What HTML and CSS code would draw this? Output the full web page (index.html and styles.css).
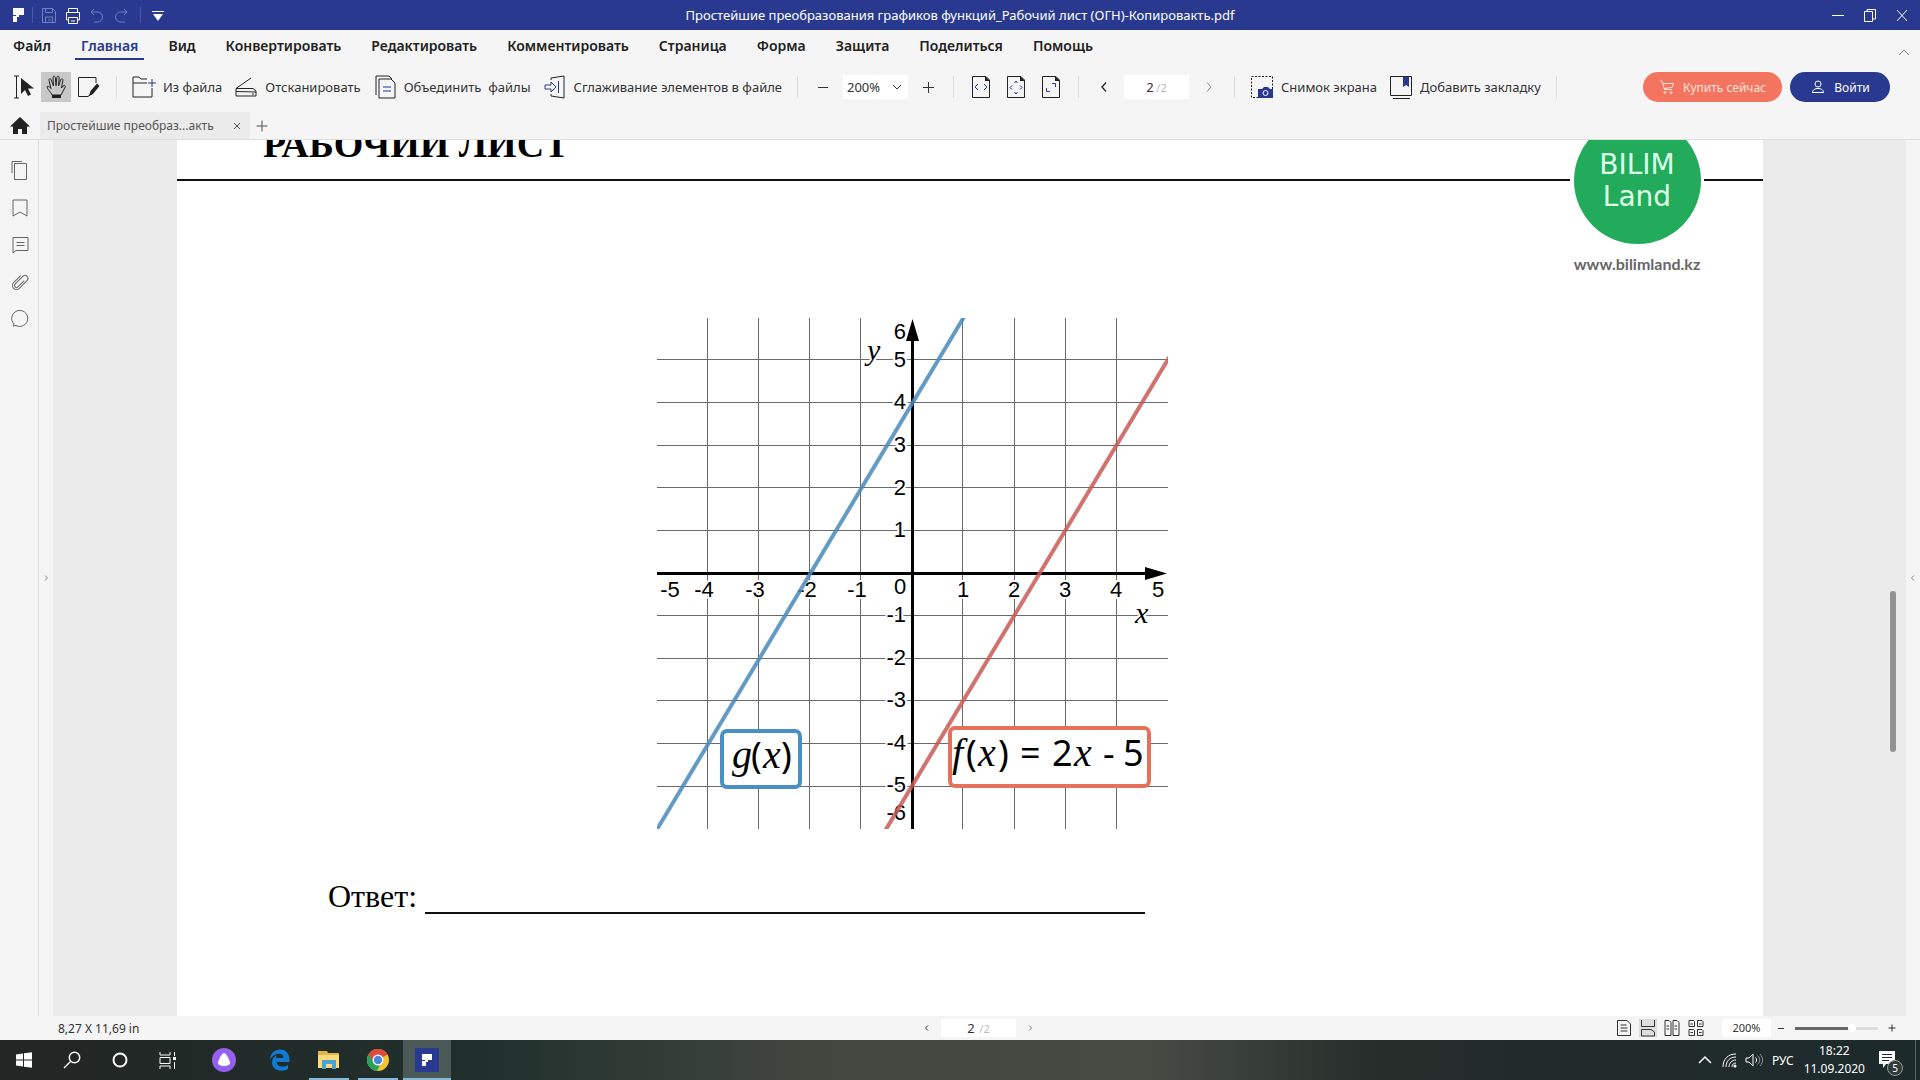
FILE: index.html
```
<!DOCTYPE html>
<html lang="ru">
<head>
    <meta charset="UTF-8">
    <meta name="viewport" content="width=device-width, initial-scale=1.0">
    <title>Простейшие преобразования графиков функций</title>
    <link rel="stylesheet" href="styles.css">
</head>
<body>
    <header class="titlebar">
        <div class="quick">
            <svg class="icon" viewBox="0 0 24 24"><path class="fill" d="M7 5h11v7h-5v2h-2v5H7v-6h3v-1H7z"/></svg>
            <span class="bar"></span>
            <button class="dim" aria-label="Сохранить"><svg class="icon" viewBox="0 0 24 24"><path d="M5.500 5.500h10l3 3v11h-13zM8.500 5.500v4h7v-4M8.500 19v-5h7v5M11 17h3"/></svg></button>
            <button aria-label="Печать"><svg class="icon" viewBox="0 0 24 24"><path d="M7.500 9V5.500h9V9M7.500 17h-2V9.500h13V17h-2M7.500 14.500h9v6h-9zM10 18h4"/></svg></button>
            <button class="dim" aria-label="Отменить"><svg class="icon" viewBox="0 0 24 24"><path d="M9 6L6 9l3 3M6.500 9h6a5 5 0 010 10H9"/></svg></button>
            <button class="dim" aria-label="Повторить"><svg class="icon" viewBox="0 0 24 24"><path d="M15 6l3 3-3 3M17.500 9h-6a5 5 0 000 10H16"/></svg></button>
            <span class="bar"></span>
            <button aria-label="Настройка панели"><svg class="icon" viewBox="0 0 24 24"><path d="M6 8.500h12"/><path class="fill" d="M7 11h10l-5 7z"/></svg></button>
        </div>
        <div class="file-name">Простейшие преобразования графиков функций_Рабочий лист (ОГН)-Копировакть.pdf</div>
        <div class="window-buttons">
            <button aria-label="Свернуть"><svg class="icon" viewBox="0 0 24 24"><path d="M6 12.500h12"/></svg></button>
            <button aria-label="Развернуть"><svg class="icon" viewBox="0 0 24 24"><path d="M6.500 8.500h8v10h-8zM9 8V6.500h8.500V16H15"/></svg></button>
            <button aria-label="Закрыть"><svg class="icon" viewBox="0 0 24 24"><path d="M7 7l10 11M17 7L7 18"/></svg></button>
        </div>
    </header>

    <nav class="menu">
        <button>Файл</button>
        <button class="active">Главная</button>
        <button>Вид</button>
        <button>Конвертировать</button>
        <button>Редактировать</button>
        <button>Комментировать</button>
        <button>Страница</button>
        <button>Форма</button>
        <button>Защита</button>
        <button>Поделиться</button>
        <button>Помощь</button>
        <button class="collapse" aria-label="Свернуть ленту"><svg class="icon" viewBox="0 0 24 24"><path d="M7 22l5-5 5 5"/></svg></button>
    </nav>

    <div class="toolbar">
        <div class="modes">
            <button aria-label="Выделение"><svg class="tool-icon" viewBox="0 0 24 24"><path d="M2 1h5M4.500 1v22M2 23h5"/><path class="fill" d="M9 3v16l4-4 3 6 3-1.500-3-6h6z"/></svg></button>
            <button class="on" aria-label="Рука"><svg class="tool-icon" viewBox="0 0 24 24"><path d="M8 20c-1-3-5-6-5-8 0-1.500 2-1 4 1.500L5 5.500c-.5-2 1.600-2.400 2.200-.6L9.500 11 9 2.700c0-2 2.100-2 2.300 0l.7 8 .9-8.200c.3-2 2.400-1.600 2.200.3L14.600 11l2.100-6.200c.6-1.700 2.600-1 2.200.8L17.500 13l1.700-2c1.200-1.300 2.700-.3 2 1L17 20M8 20h9"/><path class="fill" d="M8 20h9v3H8z"/></svg></button>
            <button aria-label="Правка"><svg class="tool-icon" viewBox="0 0 24 24"><path d="M20 8V2.500H2.500v19H12l4-3"/><path class="fill" d="M13 21l1.500-5L21 8.500l2.500 2.500-6.500 8z"/></svg></button>
        </div>
        <span class="sep"></span>
        <div class="actions">
            <button><svg class="tool-icon" viewBox="0 0 24 24"><path d="M15 4H9L7 2H1v20h19V13M1 8h14"/><path class="accent" d="M20 4v8M16 8h8"/></svg>Из файла</button>
            <button><svg class="tool-icon" viewBox="0 0 24 24"><path d="M17 3L2 13.500V21h20v-5l-3-2.500H2M2 16.500l20 .5M18 19h2"/></svg>Отсканировать</button>
            <button><svg class="tool-icon" viewBox="0 0 24 24"><path d="M6 4h12l4 4v15H6zM3 20V1h13l3 3"/><path class="accent" d="M10 12h8M10 16h8"/></svg>Объединить&nbsp; файлы</button>
            <button><svg class="tool-icon" viewBox="0 0 24 24"><path d="M8 5V3l13-2v22L8 21v-2"/><path class="accent" d="M2 10h6V7l5 5-5 5v-3H2zM15.500 6v12"/></svg>Сглаживание элементов в файле</button>
        </div>
        <span class="sep"></span>
        <div class="zoom">
            <button class="step" aria-label="Уменьшить"><svg class="step-icon" viewBox="0 0 20 20"><path d="M5 10.500h10"/></svg></button>
            <div class="select-box">
                <select aria-label="Масштаб"><option>200%</option><option>100%</option></select>
                <svg class="arrow" viewBox="0 0 10 10"><path d="M1 3l4 4 4-4"/></svg>
            </div>
            <button class="step" aria-label="Увеличить"><svg class="step-icon" viewBox="0 0 20 20"><path d="M5 10.500h11M10.500 5v11"/></svg></button>
        </div>
        <span class="sep"></span>
        <div class="fit">
            <button aria-label="По ширине"><svg class="tool-icon" viewBox="0 0 24 24"><path d="M3.500 1.500H17l3.500 3.500v17.500h-17z"/><path class="fill" d="M16 1l5 5h-5z"/><path class="accent" d="M9 9l-3 3 3 3M15 9l3 3-3 3"/></svg></button>
            <button aria-label="Страница целиком"><svg class="tool-icon" viewBox="0 0 24 24"><path d="M3.500 1.500H17l3.500 3.500v17.500h-17z"/><path class="fill" d="M16 1l5 5h-5z"/><path class="accent" d="M8 10.500L6 12.500l2 2M16 10.500l2 2-2 2M10.500 8l1.500-2 1.500 2M10.500 17l1.500 2 1.500-2"/></svg></button>
            <button aria-label="Реальный размер"><svg class="tool-icon" viewBox="0 0 24 24"><path d="M3.500 1.500H17l3.500 3.500v17.500h-17z"/><path class="fill" d="M16 1l5 5h-5z"/><path class="accent" d="M13 8.500h3.500V12M7.500 13v3.500H11"/></svg></button>
        </div>
        <span class="sep"></span>
        <div class="pager">
            <button class="step" aria-label="Предыдущая страница"><svg class="step-icon" viewBox="0 0 20 20"><path stroke-width="1.500" d="M12 5.500L8 10l4 4.500"/></svg></button>
            <label class="page-box"><input type="text" value="2" aria-label="Страница"><span>/2</span></label>
            <button class="step next" aria-label="Следующая страница"><svg class="step-icon" viewBox="0 0 20 20"><path d="M8 5.500l4 4.500-4 4.500"/></svg></button>
        </div>
        <span class="sep"></span>
        <div class="actions">
            <button><svg class="tool-icon" viewBox="0 0 24 24"><path stroke-dasharray="2 1.500" d="M1.500 1.500h21v21h-21z"/><path class="accent-fill" d="M8 14h4l2-2h4l2 2h3v9H8z"/><circle cx="15.500" cy="18" r="2.500" stroke="#fff"/></svg>Снимок экрана</button>
            <button><svg class="tool-icon" viewBox="0 0 24 24"><path d="M1.500 1.500h21v19h-21zM4 23.500h17"/><path class="accent-fill" d="M14 2h6v10l-3-2-3 2z"/></svg>Добавить закладку</button>
        </div>
        <span class="sep"></span>
        <div class="account">
            <button class="pill buy"><svg class="pill-icon" viewBox="0 0 16 16"><path d="M1 2h2l2.500 8.500H13M4 4.500h10.500L13 8.500l-8 1"/><circle cx="6" cy="13.500" r="1"/><circle cx="12" cy="13.500" r="1"/></svg>Купить сейчас</button>
            <button class="pill login"><svg class="pill-icon" viewBox="0 0 16 16"><circle cx="8" cy="5" r="3"/><path d="M2.500 13.500c0-5.500 11-5.500 11 0z"/></svg>Войти</button>
        </div>
    </div>

    <div class="tabs">
        <button class="home" aria-label="Домой"><svg class="icon" viewBox="0 0 24 24"><path class="fill" d="M12 3L2 12.500h3V20h5v-5h4v5h5v-7.500h3z"/></svg></button>
        <div class="tab">
            <span>Простейшие преобраз...акть</span>
            <button class="tab-close" aria-label="Закрыть вкладку"><svg class="small-icon" viewBox="0 0 12 12"><path d="M3 3l6 6M9 3L3 9"/></svg></button>
        </div>
        <button class="tab-add" aria-label="Новая вкладка"><svg class="small-icon" viewBox="0 0 12 12"><path d="M.5 6h11M6 .5v11"/></svg></button>
    </div>

    <main class="workspace">
        <aside class="side">
            <button aria-label="Миниатюры"><svg class="icon" viewBox="0 0 24 24"><path d="M6.500 4.500h12v16h-12zM4 14V2.500h10"/></svg></button>
            <button aria-label="Закладки"><svg class="icon" viewBox="0 0 24 24"><path d="M5 4h14v16l-7-4-7 4z"/></svg></button>
            <button aria-label="Комментарии"><svg class="icon" viewBox="0 0 24 24"><path d="M5 4.500h15v13H8l-3 2.500zM8.500 9.500h8M8.500 12.500h8"/></svg></button>
            <button aria-label="Вложения"><svg class="icon" viewBox="0 0 24 24"><g transform="rotate(45 12 12)"><path d="M8 7v10a4 4 0 008 0V6a3 3 0 00-6 0v11a2 2 0 004 0V8"/></g></svg></button>
            <button aria-label="Поиск"><svg class="icon" viewBox="0 0 24 24"><path d="M6 17a8 8 0 112 1.500L5 19z"/></svg></button>
        </aside>
        <button class="edge" aria-label="Показать панель"><svg class="edge-icon" viewBox="0 0 8 8"><path d="M3 1.500L5.500 4 3 6.500"/></svg></button>
        <div class="viewer">
            <article class="page">
                <div class="page-head">
                    <h1>РАБОЧИЙ ЛИСТ</h1>
                    <div class="logo">
                        <div class="logo-circle"><span>BILIM</span><span>Land</span></div>
                        <a href="#">www.bilimland.kz</a>
                    </div>
                </div>

                <svg class="chart" viewBox="0 0 511 511" role="img" aria-label="Графики функций g(x) и f(x)">
                    <path class="grid" d="M50.500 0v511M101.500 0v511M152.500 0v511M203.500 0v511M305.500 0v511M357.500 0v511M408.500 0v511M459.500 0v511M0 41.500h511M0 84.500h511M0 127.500h511M0 169.500h511M0 212.500h511M0 297.500h511M0 340.500h511M0 382.500h511M0 425.500h511M0 468.500h511"/>
                    <g class="nums">
                        <text x="13" y="279">-5</text>
                        <text x="47" y="279">-4</text>
                        <text x="98" y="279">-3</text>
                        <text x="150" y="279">-2</text>
                        <text x="200" y="279">-1</text>
                        <text x="243" y="276">0</text>
                        <text x="306" y="279">1</text>
                        <text x="357" y="279">2</text>
                        <text x="408" y="279">3</text>
                        <text x="459" y="279">4</text>
                        <text x="501" y="279">5</text>
                    </g>
                    <g class="nums end">
                        <text x="249" y="21">6</text>
                        <text x="249" y="49">5</text>
                        <text x="249" y="91">4</text>
                        <text x="249" y="134">3</text>
                        <text x="249" y="177">2</text>
                        <text x="249" y="219">1</text>
                        <text x="249" y="304">-1</text>
                        <text x="249" y="347">-2</text>
                        <text x="249" y="389">-3</text>
                        <text x="249" y="432">-4</text>
                        <text x="249" y="474">-5</text>
                        <text x="249" y="502">-6</text>
                    </g>
                    <text class="axis-name" x="210" y="42">y</text>
                    <text class="axis-name" x="478" y="305">x</text>
                    <path class="axis" d="M0 255.500h495M255.500 12v499"/>
                    <path d="M510 255.500l-22-6.500v13zM255.500 1l-6.500 22h13z"/>
                    <path class="line-g" d="M-1 513L307-1"/>
                    <path class="line-f" d="M228 513L513 38"/>
                    <rect class="box-g" x="65" y="413" width="78" height="56" rx="5"/>
                    <rect class="box-f" x="293" y="410" width="199" height="58" rx="5"/>
                    <g class="formula">
                        <text class="math" x="75" y="450">g</text>
                        <text x="94" y="450">(</text>
                        <text class="math" x="106" y="450">x</text>
                        <text x="124" y="450">)</text>
                        <text class="math" x="295" y="448">f</text>
                        <text x="309" y="448">(</text>
                        <text class="math" x="321" y="448">x</text>
                        <text x="341" y="448">)</text>
                        <text x="363" y="448">=</text>
                        <text x="395" y="448">2</text>
                        <text class="math" x="417" y="448">x</text>
                        <text x="446" y="448">-</text>
                        <text x="466" y="448">5</text>
                    </g>
                </svg>

                <div class="answer"><label for="answer">Ответ:</label><input type="text" id="answer"></div>
            </article>
            <span class="thumb"></span>
        </div>
        <button class="edge" aria-label="Показать панель справа"><svg class="edge-icon" viewBox="0 0 8 8"><path d="M5 1.500L2.500 4 5 6.500"/></svg></button>
    </main>

    <footer class="status">
        <span class="size">8,27 X 11,69 in</span>
        <div class="status-pager">
            <button aria-label="Назад"><svg class="edge-icon" viewBox="0 0 8 8"><path d="M5 1.500L2.500 4 5 6.500"/></svg></button>
            <label class="page-box"><input type="text" value="2" aria-label="Номер страницы"><span>/2</span></label>
            <button class="next" aria-label="Вперед"><svg class="edge-icon" viewBox="0 0 8 8"><path d="M3 1.500L5.500 4 3 6.500"/></svg></button>
        </div>
        <div class="status-right">
            <button aria-label="Одна страница"><svg class="view-icon" viewBox="0 0 18 18"><path d="M2.500 1.500H12L15.500 5v11.500h-13zM5.500 6h6M5.500 9h7M5.500 12h7"/></svg></button>
            <button class="on" aria-label="Прокрутка"><svg class="view-icon" viewBox="0 0 18 18"><path d="M2.500 1v6.500h13V1M2.500 17v-6.500H12L15.500 13v4z"/></svg></button>
            <button aria-label="Две страницы"><svg class="view-icon" viewBox="0 0 18 18"><path d="M2 1.500h4l2 2v13H2zM10 1.500h4l2 2v13h-6zM3.500 7H6M3.500 10H6M11.500 7H14M11.500 10H14"/></svg></button>
            <button aria-label="Сетка страниц"><svg class="view-icon" viewBox="0 0 18 18"><path d="M2 1.500h4.500l1 1v5H2zM10.500 1.500H15l1 1v5h-5.500zM2 10.500h4.500l1 1v5H2zM10.500 10.500H15l1 1v5h-5.500zM3.500 5H6M12 5h2.500M3.500 13.500H6M12 13.500h2.500"/></svg></button>
            <span class="percent">200%</span>
            <button class="mini" aria-label="Мельче"><svg class="edge-icon" viewBox="0 0 8 8"><path d="M1 4.500h6"/></svg></button>
            <input type="range" class="slider" aria-label="Масштаб страницы" min="0" max="100" value="70">
            <button class="mini" aria-label="Крупнее"><svg class="edge-icon" viewBox="0 0 8 8"><path d="M.5 4h7M4 .5v7"/></svg></button>
        </div>
    </footer>

    <div class="taskbar">
        <div class="apps">
            <button aria-label="Пуск"><svg class="icon" viewBox="0 0 24 24"><path class="fill" d="M4 6.500l7-1v6H4zM12 5.300l8-1.100v7.300h-8zM4 12.500h7v6l-7-1zM12 12.500h8v7.300l-8-1.100z"/></svg></button>
            <button aria-label="Поиск"><svg class="icon" viewBox="0 0 24 24"><g stroke-width="1.500"><circle cx="14.500" cy="9.500" r="5.200"/><path d="M10.500 13.500L4 20"/></g></svg></button>
            <button aria-label="Помощник"><svg class="icon" viewBox="0 0 24 24"><circle cx="12" cy="12" r="6.500" stroke-width="2"/></svg></button>
            <button aria-label="Представление задач"><svg class="icon" viewBox="0 0 24 24"><path d="M4 4v3h10V4M4 9.500h10v6H4zM4 21v-3h10v3M18.500 4v4M18.500 14v7"/><path class="fill" d="M17 9h3v3h-3z"/></svg></button>
        </div>
        <div class="apps pinned">
            <button aria-label="Алиса"><svg class="icon" viewBox="0 0 24 24"><circle cx="12" cy="12" r="12" fill="#9460ee" stroke="none"/><path class="fill" d="M12 5c2 0 6 7.500 6 10 0 4-12 4-12 0 0-2.500 4-10 6-10z"/></svg></button>
        </div>
        <div class="apps pinned">
            <button aria-label="Edge"><svg class="icon" viewBox="0 0 24 24"><path fill="#0f7cd4" stroke="none" d="M2 11.500C2.500 5 7 1.500 12 1.500c6.500 0 9.500 5 9.500 10v2.500H8.500c.5 5.500 7.500 5.500 11.500 3v4c-6 3.500-16 1.500-16-6.500 0-3.500 2-6 5-7.500-.5.800-1 1.800-1 3h7.500c0-6-9.500-5.500-13.500 1.500z"/></svg></button>
            <button class="open" aria-label="Проводник"><svg class="icon" viewBox="0 0 24 24"><path fill="#e3b54a" stroke="none" d="M1 3h9l1 2h11v15H1z"/><path fill="#fbdb79" stroke="none" d="M1 7h21v13H1z"/><path fill="#4aa3d6" stroke="none" d="M5 12h14v9h-4v-5H9v5H5z"/></svg></button>
            <button class="open" aria-label="Chrome"><svg class="icon" viewBox="0 0 24 24"><g stroke="none"><circle cx="12" cy="12" r="11" fill="#f2c230"/><path fill="#dd4b3e" d="M12 12L2.500 6.500a11 11 0 0119 0z"/><path fill="#2aa15a" d="M12 12L2.500 6.500a11 11 0 008.500 16.500l4.500-9z"/><path fill="#dd4b3e" d="M12 7h9.800a11 11 0 00-19.300-.5L7.500 14z"/><circle cx="12" cy="12" r="5.500" fill="#fff"/><circle cx="12" cy="12" r="4.200" fill="#4a86dd"/></g></svg></button>
            <button class="open current" aria-label="PDFelement"><svg class="icon" viewBox="0 0 24 24"><path fill="#293990" stroke="none" d="M0 0h24v24H0z"/><path class="fill" d="M7 6h10v6h-4v2h-2v4H7v-5h3v-1H7z"/></svg></button>
        </div>
        <div class="tray">
            <svg class="tray-icon" viewBox="0 0 24 24"><path d="M6 15l6-6 6 6" stroke-width="1.500"/></svg>
            <svg class="tray-icon" viewBox="0 0 24 24"><path d="M6 19C6 11 11 6 19 6M9 19c0-6 4-10 10-10M12 19c0-4 3-7 7-7M15 19c0-2.500 1.500-4 4-4"/><circle cx="18" cy="18" r="1.500" class="fill"/></svg>
            <svg class="tray-icon" viewBox="0 0 24 24"><path d="M5 10h3l4-4v12l-4-4H5zM14.500 9.500c1.500 1.500 1.500 3.500 0 5"/><path opacity=".5" d="M16.500 7.500c3 3 3 6 0 9M19 6c3.500 4 3.500 8 0 12"/></svg>
            <span class="lang">РУС</span>
            <div class="clock"><span>18:22</span><span>11.09.2020</span></div>
            <div class="notify">
                <svg class="icon" viewBox="0 0 24 24"><path class="fill" d="M4 3h16v13h-9l-3 4v-4H4z"/><path stroke="#1d2a2b" d="M7 6.500h10M7 9.500h10M7 12.500h7"/></svg>
                <span class="badge">5</span>
            </div>
            <span class="peek"></span>
        </div>
    </div>
</body>
</html>
```
FILE: styles.css
```
* {
    box-sizing: border-box;
}
body {
    margin: 0;
    height: 100vh;
    display: flex;
    flex-direction: column;
    overflow: hidden;
    background-color: #f5f5f5;
    color: #333;
    font-family: "Noto Sans", "Open Sans", sans-serif;
    font-size: 13px;
}
button {
    display: flex;
    align-items: center;
    justify-content: center;
    padding: 0;
    border: none;
    background: none;
    color: inherit;
    font: inherit;
    white-space: nowrap;
    cursor: pointer;
}
input, select {
    border: none;
    font: inherit;
    color: inherit;
}
svg {
    display: block;
    flex: none;
    fill: none;
    stroke: currentColor;
}
.fill {
    fill: currentColor;
    stroke: none;
}
.accent {
    stroke: #293990;
}
.accent-fill {
    fill: #293990;
    stroke: none;
}
.icon, .tool-icon {
    width: 24px;
    height: 24px;
}
.step-icon {
    width: 20px;
    height: 20px;
}
.small-icon {
    width: 12px;
    height: 12px;
}
.edge-icon {
    width: 8px;
    height: 8px;
}

/* title bar */
.titlebar {
    display: grid;
    grid-template-columns: 1fr auto 1fr;
    align-items: center;
    height: 30px;
    background-color: #293990;
    color: #fff;
}
.quick {
    display: flex;
    align-items: center;
    padding-left: 6px;
}
.bar {
    width: 1px;
    height: 16px;
    margin: 0 4px 0 2px;
    background-color: #4a58a6;
}
button + .bar {
    margin: 0 5px 0 7px;
}
.dim {
    color: #7480c0;
}
.window-buttons {
    display: flex;
    justify-content: flex-end;
    gap: 8px;
    padding-right: 6px;
}

/* menu */
.menu {
    display: flex;
    gap: 18px;
    height: 32px;
    padding: 2px 4px 2px 7px;
    font-size: 14px;
    font-weight: 600;
    color: #222;
}
.menu button {
    padding: 0 6px;
    border-bottom: 2px solid transparent;
}
.menu .active {
    color: #293990;
    border-bottom-color: #293990;
}
.menu .collapse {
    margin-left: auto;
    padding: 0;
    color: #777;
}

/* toolbar */
.toolbar {
    display: flex;
    align-items: center;
    height: 50px;
    padding-left: 9px;
}
.modes {
    display: flex;
    gap: 2px;
    color: #222;
}
.modes button {
    width: 30px;
    height: 30px;
}
.modes .on {
    background-color: #c8c8c8;
}
.sep {
    width: 1px;
    height: 22px;
    margin: 0 15px;
    background-color: #ddd;
}
.actions {
    display: flex;
    gap: 12px;
}
.actions button {
    gap: 7px;
}
.actions svg {
    color: #222;
}
.modes + .sep {
    margin: 0 15px 0 13px;
}
.zoom, .pager {
    display: flex;
    align-items: center;
    gap: 10px;
}
.fit {
    display: flex;
    gap: 11px;
    color: #222;
}
.select-box {
    position: relative;
    width: 65px;
    height: 24px;
    background-color: #fff;
}
.select-box select {
    appearance: none;
    width: 100%;
    height: 100%;
    padding: 0 4px;
    background: none;
}
.arrow {
    position: absolute;
    right: 6px;
    top: 7px;
    width: 10px;
    height: 10px;
    pointer-events: none;
}
.page-box {
    display: flex;
    align-items: center;
    justify-content: center;
    width: 65px;
    height: 24px;
    background-color: #fff;
    color: #bbb;
    font-size: 11px;
}
.page-box input {
    width: 10px;
    padding: 0;
    background: none;
    color: #333;
    font-size: 13px;
}
.next {
    color: #888;
}
.account {
    display: flex;
    gap: 8px;
    margin-left: auto;
    padding-right: 30px;
}
.pill {
    gap: 8px;
    height: 30px;
    border-radius: 15px;
    color: #fff;
    font-size: 12px;
}
.pill-icon {
    width: 16px;
    height: 16px;
}
.buy {
    width: 139px;
    background-color: #f3745f;
    color: #fde3dd;
}
.login {
    width: 100px;
    background-color: #293990;
}

/* document tabs */
.tabs {
    display: flex;
    height: 28px;
    border-bottom: 1px solid #ddd;
    color: #555;
}
.home {
    width: 40px;
    color: #222;
}
.tab {
    display: flex;
    align-items: center;
    justify-content: space-between;
    width: 210px;
    padding: 0 7px;
    background-color: #ebebeb;
    font-size: 12px;
}
.tab-add {
    width: 24px;
}

/* workspace */
.workspace {
    flex: 1;
    display: flex;
    min-height: 0;
}
.side {
    display: flex;
    flex-direction: column;
    align-items: center;
    gap: 13px;
    width: 39px;
    padding: 19px 0 0 1px;
    border-right: 1px solid #ddd;
    color: #666;
}
.edge {
    width: 14px;
    color: #888;
}
.viewer {
    position: relative;
    flex: 1;
    overflow: hidden;
    padding: 0 143px 0 124px;
    background-color: #ebebeb;
}
.thumb {
    position: absolute;
    right: 10px;
    top: 451px;
    width: 6px;
    height: 161px;
    border-radius: 3px;
    background-color: #929292;
}

/* the sheet is scrolled a little below its top edge */
.page {
    height: 1200px;
    margin-top: -60px;
    background-color: #fff;
    color: #000;
}
.page-head {
    position: relative;
    display: flex;
    align-items: flex-end;
    height: 101px;
    padding: 0 86px 15px;
    border-bottom: 2px solid #111;
}
.page-head h1 {
    margin: 0;
    font: bold 38px/40px "Liberation Serif", serif;
}
.logo {
    position: absolute;
    right: 59px;
    top: 37px;
    display: flex;
    flex-direction: column;
    align-items: center;
    width: 134px;
    background-color: #fff;
}
.logo-circle {
    display: flex;
    flex-direction: column;
    align-items: center;
    justify-content: center;
    width: 127px;
    height: 127px;
    border-radius: 50%;
    background-color: #22ab5b;
    color: #dfffe9;
    font: 28px/32px "DejaVu Sans", sans-serif;
}
.logo a {
    margin-top: 8px;
    color: #666;
    font: bold 16px/24px "Lato", sans-serif;
    text-decoration: none;
}
.chart {
    width: 511px;
    height: 511px;
    margin: 137px 0 0 480px;
    fill: #000;
    stroke: none;
}
.grid {
    stroke: #6a6a6a;
}
.axis {
    stroke: #000;
    stroke-width: 3;
}
.nums {
    font: 22px "Liberation Sans", sans-serif;
    text-anchor: middle;
    stroke: #fff;
    stroke-width: 4;
    paint-order: stroke;
}
.end {
    text-anchor: end;
}
.axis-name {
    font: italic 30px "Liberation Serif", serif;
    stroke: #fff;
    stroke-width: 4;
    paint-order: stroke;
}
.line-g, .line-f {
    stroke-width: 4;
    opacity: 0.85;
}
.line-g {
    stroke: #4a8abb;
}
.line-f {
    stroke: #c85a55;
}
.box-g, .box-f {
    fill: #fff;
    stroke-width: 4;
}
.box-g {
    stroke: #4a8fc4;
}
.box-f {
    stroke: #e5705c;
}
.formula {
    font: 36px "Noto Sans", sans-serif;
}
.math {
    font: italic 40px "Liberation Serif", serif;
}
.answer {
    display: flex;
    align-items: flex-end;
    gap: 8px;
    padding: 49px 0 0 151px;
    font: 32px/36px "Liberation Serif", serif;
}
.answer input {
    width: 720px;
    height: 33px;
    border-bottom: 2px solid #111;
}

/* status bar */
.status {
    display: grid;
    grid-template-columns: 1fr auto 1fr;
    align-items: center;
    height: 24px;
    padding: 0 24px 0 58px;
}
.status .size {
    font-size: 12px;
}
.status-pager {
    display: flex;
    align-items: center;
    gap: 10px;
    padding-left: 3px;
}
.status .page-box {
    gap: 2px;
    width: 75px;
    height: 18px;
}
.status-right {
    display: flex;
    align-items: center;
    justify-content: flex-end;
    gap: 6px;
}
.view-icon {
    width: 18px;
    height: 18px;
}
.status-right .on {
    background-color: #ddd;
}
.percent {
    width: 49px;
    margin-left: 11px;
    background-color: #fff;
    font-size: 11px;
    line-height: 18px;
    text-align: center;
}
.slider {
    appearance: none;
    width: 83px;
    height: 10px;
    margin: 0 4px;
    background: linear-gradient(to right, #666 70%, #ddd 70%) center / 100% 3px no-repeat;
}
.slider::-webkit-slider-thumb {
    appearance: none;
    width: 8px;
    height: 8px;
    border-radius: 50%;
    background-color: #fff;
}

/* windows taskbar */
.taskbar {
    display: flex;
    height: 40px;
    background: linear-gradient(to right, #222523, #20302d 25%, #42463f 42%, #454b43 60%, #262c2a 72%, #1c2a2c);
    color: #fff;
}
.apps {
    display: flex;
    gap: 0;
}
.apps button {
    width: 48px;
}
.pinned {
    gap: 1px;
    padding-left: 8px;
}
.open {
    background: linear-gradient(#86b9d8, #86b9d8) center bottom / 40px 2px no-repeat;
}
.apps .current {
    background-size: 48px 2px;
    background-color: #4b5957;
}
.tray {
    display: flex;
    align-items: center;
    margin-left: auto;
    padding-right: 4px;
    font-size: 12px;
}
.tray-icon {
    width: 24px;
    height: 24px;
}
.lang {
    margin-left: 7px;
}
.clock {
    display: flex;
    flex-direction: column;
    align-items: center;
    margin: 0 10px;
    line-height: 18px;
}
.notify {
    position: relative;
}
.badge {
    position: absolute;
    left: 12px;
    top: 12px;
    width: 16px;
    height: 16px;
    border: 1px solid #999;
    border-radius: 50%;
    background-color: #303a3b;
    font-size: 10px;
    line-height: 14px;
    text-align: center;
}
.peek {
    width: 1px;
    height: 40px;
    margin-left: 16px;
    background-color: #5b6566;
}
```
